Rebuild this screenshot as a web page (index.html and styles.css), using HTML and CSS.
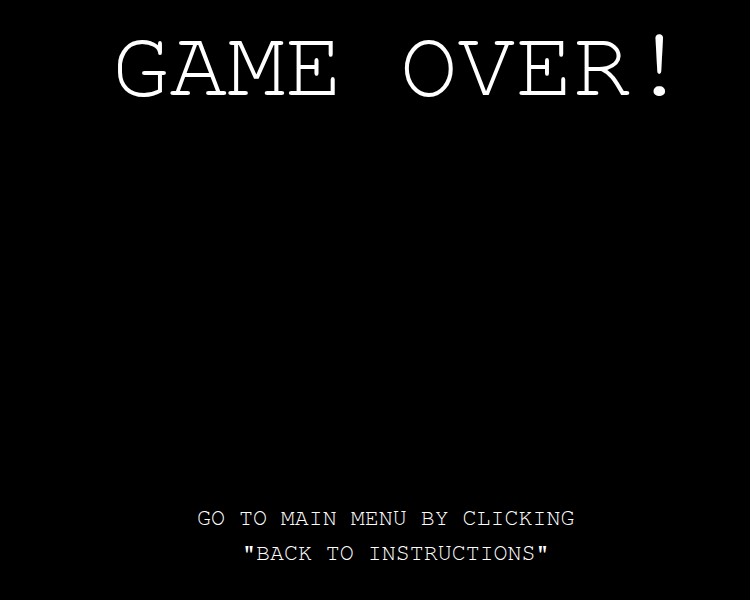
FILE: index.html
```html
<!DOCTYPE html>
<html>
<head>
<meta charset="utf-8">
<link rel="stylesheet" href="styles.css">
</head>
<body>
<div class="screen">
  <h1 class="title">GAME OVER!</h1>
  <div class="message">
    <p class="line">GO TO MAIN MENU BY CLICKING</p>
    <p class="line line-indent">"BACK TO INSTRUCTIONS"</p>
  </div>
</div>
</body>
</html>
```
FILE: styles.css
```css
html, body {
  margin: 0;
  padding: 0;
  background: #000;
}
.screen {
  width: 750px;
  height: 600px;
  display: flex;
  flex-direction: column;
  font-family: "FreeMono", "Liberation Mono", "Courier New", monospace;
  color: #fff;
}
.title {
  margin: 18px 0 0 0;
  padding-left: 112px;
  font-size: 96px;
  font-weight: normal;
  line-height: 96px;
  white-space: pre;
}
.message {
  margin-top: auto;
  padding: 0 0 29px 197px;
  font-size: 23.3px;
  line-height: 35px;
}
.line {
  margin: 0;
  white-space: pre;
}
.line-indent {
  padding-left: 45px;
}
```
